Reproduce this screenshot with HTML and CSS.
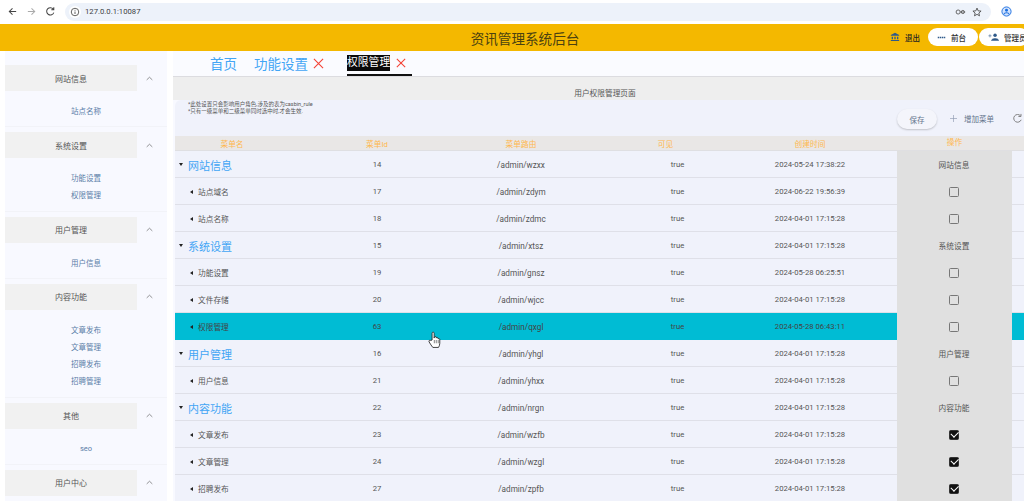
FILE: index.html
```html
<!DOCTYPE html>
<html lang="zh">
<head>
<meta charset="utf-8">
<title>资讯管理系统后台</title>
<link rel="stylesheet" href="styles.css">
</head>
<body>
<div class="browser">
  <svg class="bicon" viewBox="0 0 12 12"><path d="M10 6H2.5M6 2.5 2.5 6 6 9.5" fill="none" stroke="#444" stroke-width="1.1"/></svg>
  <svg class="bicon dim" viewBox="0 0 12 12"><path d="M2 6h7.5M6 2.5 9.5 6 6 9.5" fill="none" stroke="#aaa" stroke-width="1.1"/></svg>
  <svg class="bicon" viewBox="0 0 12 12"><path d="M9.6 7.2A4 4 0 1 1 9 3.4M9.6 1.4v2.7H6.9" fill="none" stroke="#444" stroke-width="1.1"/></svg>
  <div class="address">
    <span class="site-info"><svg viewBox="0 0 12 12" width="10" height="10"><circle cx="6" cy="6" r="4.5" fill="none" stroke="#444" stroke-width="1"/><path d="M6 5.4v3M6 3.4v1" stroke="#444" stroke-width="1"/></svg></span>
    <span class="url">127.0.0.1:10087</span>
    <span class="addr-actions">
      <svg viewBox="0 0 14 12" width="11" height="10"><circle cx="4" cy="6" r="2.6" fill="none" stroke="#555" stroke-width="1.1"/><circle cx="10" cy="6" r="2" fill="none" stroke="#555" stroke-width="1.1"/><path d="M6.5 6H13" stroke="#555"/></svg>
      <svg viewBox="0 0 12 12" width="10" height="10"><path d="M6 1.3 7.4 4.6l3.5.3-2.7 2.3.8 3.4L6 8.8l-3 1.8.8-3.4L1.1 4.9l3.5-.3z" fill="none" stroke="#444" stroke-width="1"/></svg>
    </span>
  </div>
  <svg class="profile" viewBox="0 0 12 12" width="11" height="11"><circle cx="6" cy="6" r="5" fill="#d3e3fd" stroke="#1a6fe0" stroke-width="1"/><circle cx="6" cy="4.7" r="1.6" fill="#1a6fe0"/><path d="M2.9 9.2c1-2.3 5.2-2.3 6.2 0" fill="none" stroke="#1a6fe0" stroke-width="1.1"/></svg>
</div>

<header class="topbar">
  <h1 class="title">资讯管理系统后台</h1>
  <div class="top-actions">
    <svg class="bank" viewBox="0 0 12 12" width="10" height="10"><path d="M6 1 1 3.6v1h10v-1zM2 5.6h1.6v3.2H2zM5.2 5.6h1.6v3.2H5.2zM8.4 5.6H10v3.2H8.4zM1 9.6h10v1.2H1z" fill="#2f5a8a"/></svg>
    <span class="logout">退出</span>
    <span class="pill"><svg viewBox="0 0 12 6" width="9" height="5"><path d="M1 3h10" stroke="#2f5a8a" stroke-width="2" stroke-dasharray="2 .8"/></svg>前台</span>
    <span class="pill"><svg viewBox="0 0 14 10" width="11" height="8"><circle cx="9" cy="2.8" r="2.2" fill="#2f5a8a"/><path d="M4.5 9.6c0-3.6 9-3.6 9 0zM0.5 3.5h4M2.5 1.5v4" fill="#2f5a8a" stroke="#2f5a8a" stroke-width=".7"/></svg>管理员</span>
  </div>
</header>

<div class="shell">
  <aside class="sidebar">
    <section class="group">
      <div class="group-head"><span class="group-name">网站信息</span><svg class="chev" viewBox="0 0 10 6"><path d="M1 5 5 1.2 9 5" fill="none" stroke="#666" stroke-width="1"/></svg></div>
      <ul class="items"><li>站点名称</li></ul>
    </section>
    <section class="group">
      <div class="group-head"><span class="group-name">系统设置</span><svg class="chev" viewBox="0 0 10 6"><path d="M1 5 5 1.2 9 5" fill="none" stroke="#666" stroke-width="1"/></svg></div>
      <ul class="items"><li>功能设置</li><li>权限管理</li></ul>
    </section>
    <section class="group">
      <div class="group-head"><span class="group-name">用户管理</span><svg class="chev" viewBox="0 0 10 6"><path d="M1 5 5 1.2 9 5" fill="none" stroke="#666" stroke-width="1"/></svg></div>
      <ul class="items"><li>用户信息</li></ul>
    </section>
    <section class="group">
      <div class="group-head"><span class="group-name">内容功能</span><svg class="chev" viewBox="0 0 10 6"><path d="M1 5 5 1.2 9 5" fill="none" stroke="#666" stroke-width="1"/></svg></div>
      <ul class="items"><li>文章发布</li><li>文章管理</li><li>招聘发布</li><li>招聘管理</li></ul>
    </section>
    <section class="group">
      <div class="group-head"><span class="group-name">其他</span><svg class="chev" viewBox="0 0 10 6"><path d="M1 5 5 1.2 9 5" fill="none" stroke="#666" stroke-width="1"/></svg></div>
      <ul class="items"><li>seo</li></ul>
    </section>
    <section class="group">
      <div class="group-head"><span class="group-name">用户中心</span><svg class="chev" viewBox="0 0 10 6"><path d="M1 5 5 1.2 9 5" fill="none" stroke="#666" stroke-width="1"/></svg></div>
    </section>
  </aside>

  <main class="main">
    <nav class="tabs">
      <span class="tab">首页</span>
      <span class="tab">功能设置<svg class="close" viewBox="0 0 12 12"><path d="M1 1l10 10M11 1 1 11" stroke="#f44336" stroke-width="1.2"/></svg></span>
      <span class="tab active"><span class="selected">权限管理</span><svg class="close small" viewBox="0 0 12 12"><path d="M1 1l10 10M11 1 1 11" stroke="#f44336" stroke-width="1.3"/></svg></span>
    </nav>
    <div class="page-title">用户权限管理页面</div>
    <div class="panel">
      <div class="toolbar">
        <div class="notes">
          <p>*此处设置只会影响用户角色,涉及的表为casbin_rule</p>
          <p>*只有一级菜单和二级菜单同时选中时,才会生效.</p>
        </div>
        <div class="tools">
          <button class="save">保存</button>
          <span class="add"><svg viewBox="0 0 10 10" width="7" height="7"><path d="M5 0v10M0 5h10" stroke="#8a97ad" stroke-width=".9"/></svg>增加菜单</span>
          <svg class="refresh" viewBox="0 0 12 12" width="11" height="11"><path d="M10 7.4A4.2 4.2 0 1 1 9.2 3M9.800 1v2.800H7" fill="none" stroke="#777" stroke-width="1"/></svg>
        </div>
      </div>

      <div class="table">
        <div class="row head"><span class="c-name">菜单名</span><span>菜单Id</span><span>菜单路由</span><span>可见</span><span class="c-time">创建时间</span><span class="c-op">操作</span></div>

        <div class="row parent"><span class="c-name"><i class="caret down"></i>网站信息</span><span>14</span><span class="c-route">/admin/wzxx</span><span class="c-vis">true</span><span class="c-time">2024-05-24 17:38:22</span><span class="c-op">网站信息</span></div>
        <div class="row child"><span class="c-name"><i class="caret left"></i>站点域名</span><span>17</span><span class="c-route">/admin/zdym</span><span class="c-vis">true</span><span class="c-time">2024-06-22 19:56:39</span><span class="c-op"><i class="check"></i></span></div>
        <div class="row child"><span class="c-name"><i class="caret left"></i>站点名称</span><span>18</span><span class="c-route">/admin/zdmc</span><span class="c-vis">true</span><span class="c-time">2024-04-01 17:15:28</span><span class="c-op"><i class="check"></i></span></div>
        <div class="row parent"><span class="c-name"><i class="caret down"></i>系统设置</span><span>15</span><span class="c-route">/admin/xtsz</span><span class="c-vis">true</span><span class="c-time">2024-04-01 17:15:28</span><span class="c-op">系统设置</span></div>
        <div class="row child"><span class="c-name"><i class="caret left"></i>功能设置</span><span>19</span><span class="c-route">/admin/gnsz</span><span class="c-vis">true</span><span class="c-time">2024-05-28 06:25:51</span><span class="c-op"><i class="check"></i></span></div>
        <div class="row child"><span class="c-name"><i class="caret left"></i>文件存储</span><span>20</span><span class="c-route">/admin/wjcc</span><span class="c-vis">true</span><span class="c-time">2024-04-01 17:15:28</span><span class="c-op"><i class="check"></i></span></div>
        <div class="row child hover"><span class="c-name"><i class="caret left"></i>权限管理</span><span>63</span><span class="c-route">/admin/qxgl</span><span class="c-vis">true</span><span class="c-time">2024-05-28 06:43:11</span><span class="c-op"><i class="check"></i></span>
          <svg class="cursor" viewBox="0 0 14 19" width="13" height="18"><path d="M4.4 9.5V2.2c0-1.6 2.2-1.6 2.2 0v5.2l.3-1c.5-1 1.8-.8 1.9.2l.1.8c.4-.9 1.7-.8 1.9.2l.1.8c.5-.7 1.7-.5 1.8.5v4.2c0 2-.8 3.4-1.4 4.4H5.2C4 15.900 2.500 14 1.200 11.600c-.8-1.400.8-2.500 1.900-1.500z" fill="#fff" stroke="#222" stroke-width=".9"/><path d="M6.800 9.500v3.500M8.900 9.500v3.500M11 9.500v3.500" stroke="#222" stroke-width=".6"/></svg>
        </div>
        <div class="row parent"><span class="c-name"><i class="caret down"></i>用户管理</span><span>16</span><span class="c-route">/admin/yhgl</span><span class="c-vis">true</span><span class="c-time">2024-04-01 17:15:28</span><span class="c-op">用户管理</span></div>
        <div class="row child"><span class="c-name"><i class="caret left"></i>用户信息</span><span>21</span><span class="c-route">/admin/yhxx</span><span class="c-vis">true</span><span class="c-time">2024-04-01 17:15:28</span><span class="c-op"><i class="check"></i></span></div>
        <div class="row parent"><span class="c-name"><i class="caret down"></i>内容功能</span><span>22</span><span class="c-route">/admin/nrgn</span><span class="c-vis">true</span><span class="c-time">2024-04-01 17:15:28</span><span class="c-op">内容功能</span></div>
        <div class="row child"><span class="c-name"><i class="caret left"></i>文章发布</span><span>23</span><span class="c-route">/admin/wzfb</span><span class="c-vis">true</span><span class="c-time">2024-04-01 17:15:28</span><span class="c-op"><i class="check on"></i></span></div>
        <div class="row child"><span class="c-name"><i class="caret left"></i>文章管理</span><span>24</span><span class="c-route">/admin/wzgl</span><span class="c-vis">true</span><span class="c-time">2024-04-01 17:15:28</span><span class="c-op"><i class="check on"></i></span></div>
        <div class="row child"><span class="c-name"><i class="caret left"></i>招聘发布</span><span>27</span><span class="c-route">/admin/zpfb</span><span class="c-vis">true</span><span class="c-time">2024-04-01 17:15:28</span><span class="c-op"><i class="check on"></i></span></div>
      </div>
    </div>
  </main>
</div>
</body>
</html>
```

FILE: styles.css
```css
* { box-sizing: border-box; }
html, body { margin: 0; padding: 0; height: 501px; overflow: hidden; }
body {
  background: #fff;
  color: #555;
  font-family: Roboto, "Noto Sans CJK SC", sans-serif;
  font-size: 8px;
}
p, h1, ul { margin: 0; padding: 0; }

/* browser chrome */
.browser {
  height: 23px;
  display: flex;
  align-items: center;
  padding-left: 7px;
  background: #fff;
}
.bicon { width: 11px; height: 11px; margin-right: 8px; }
.address {
  width: 926px;
  height: 18px;
  margin-left: 1px;
  border-radius: 9px;
  background: #edf2fa;
  display: flex;
  align-items: center;
  padding: 0 6px 0 4px;
}
.site-info {
  width: 12px;
  height: 12px;
  border-radius: 50%;
  background: #fff;
  display: flex;
  align-items: center;
  justify-content: center;
}
.url { margin-left: 4px; font-size: 7.7px; color: #3c4043; }
.addr-actions { margin-left: auto; display: flex; align-items: center; gap: 6px; padding-right: 3px; }
.profile { margin-left: 10px; }

/* top bar */
.topbar {
  height: 27px;
  margin-top: 1px;
  padding-left: 26px;
  background: #f4b800;
  display: flex;
  align-items: center;
  justify-content: center;
  position: relative;
  overflow: hidden;
}
.title { font-size: 13.6px; font-weight: 400; color: #4b4210; }
.top-actions {
  position: absolute;
  left: 890px;
  top: 4px;
  display: flex;
  align-items: center;
  width: 150px;
  height: 18px;
}
.logout { margin-left: 5px; margin-right: 8px; font-size: 7.5px; font-weight: 500; color: #222; }
.pill {
  flex: none;
  width: 50px;
  height: 18px;
  margin-right: 1px;
  border-radius: 9px;
  background: #fff;
  display: flex;
  align-items: center;
  padding-left: 9px;
  gap: 5px;
  font-size: 7.5px;
  font-weight: 500;
  color: #333;
}

/* shell */
.shell { display: flex; height: 450px; background: #fff; }
.sidebar {
  width: 162px;
  margin-left: 5px;
  padding-top: 14px;
  background: #f8f9ff;
  flex: none;
  overflow: hidden;
}
.group + .group { border-top: 1px solid #f2f3f8; padding-top: 5px; }
.group-head { display: flex; align-items: center; height: 26px; }
.group-name {
  width: 132px;
  height: 26px;
  background: #f1f1f1;
  display: flex;
  align-items: center;
  justify-content: center;
  font-size: 8px;
  color: #555;
}
.chev { width: 7px; height: 5px; margin-left: 9px; }
.items { list-style: none; padding: 11px 0 7px; }
.items li {
  height: 17.2px;
  display: flex;
  align-items: center;
  justify-content: center;
  font-size: 7.5px;
  color: #5b7ea8;
}

.main { flex: 1; min-width: 0; margin-left: 6px; background: #f8f9ff; overflow: hidden; }
.tabs {
  height: 26px;
  background: #fafbff;
  display: flex;
  align-items: center;
  padding-left: 37px;
  gap: 17px;
  border-bottom: 1px solid #dcdce0;
}
.tab { display: flex; align-items: center; font-size: 13.5px; color: #42a5f5; line-height: 20px; }
.tab.active {
  margin-left: 6px;
  font-size: 10.8px;
  color: #fff;
  height: 25px;
  border-bottom: 2px solid #111;
  padding-right: 6px;
}
.selected { background: #0a0a0a; line-height: 16px; }
.close { width: 11px; height: 11px; margin-left: 5px; }
.close.small { width: 10px; height: 10px; margin-left: 6px; }

.page-title {
  height: 23px;
  background: #eeeeee;
  display: flex;
  align-items: center;
  justify-content: center;
  padding-top: 8px;
  padding-left: 13px;
  font-size: 7.7px;
  color: #555;
}
.panel {
  margin-left: 2px;
  background: #f0f2fb;
  border-top-left-radius: 6px;
}
.toolbar { height: 36px; display: flex; justify-content: space-between; }
.notes { padding: 1px 0 0 13px; font-size: 5.5px; line-height: 7.4px; color: #555; }
.tools { display: flex; align-items: center; height: 36px; padding-top: 1px; }
.save {
  width: 40px;
  height: 20px;
  margin-top: 1px;
  border: 0;
  border-radius: 10px;
  background: #f4f5fb;
  box-shadow: 0 1px 2px rgba(0, 0, 0, .2);
  font: 7.5px Roboto, "Noto Sans CJK SC", sans-serif;
  color: #64748c;
}
.add {
  display: flex;
  align-items: center;
  gap: 7px;
  margin-left: 13px;
  font-size: 7.5px;
  color: #64748c;
}
.refresh { margin-left: 18px; margin-right: 1px; }

/* table */
.table { position: relative; }
.row {
  display: grid;
  grid-template-columns: 130px 144px 144px 145px 159px 115px 12px;
  height: 27px;
  align-items: center;
  border-bottom: 1px solid #dfe0e8;
  font-size: 7.7px;
  color: #555;
  text-align: center;
  position: relative;
}
.row > span { display: block; }
.row.head {
  height: 15px;
  background: #e9e7e6;
  border-bottom: 1px solid #dfdfe2;
  color: #ffb74d;
}
.c-name { text-align: left; display: flex !important; align-items: center; }
.row.head .c-name { justify-content: center; padding-right: 16px; }
.row.parent .c-name { padding-left: 4px; font-size: 11px; color: #42a5f5; }
.row.child .c-name { padding-left: 15px; }
.c-route { font-size: 8.2px; }
.c-vis { padding-left: 24px; }
.c-time { padding-right: 15px; white-space: nowrap; }
.row .c-op {
  align-self: stretch;
  height: 27px;
  background: #e0e0e0;
  display: flex;
  align-items: center;
  justify-content: center;
  padding-right: 1px;
}
.row.head .c-op { height: 14px; display: block; padding: 0; background: none; line-height: 14px; }
.row.hover { background: #00bcd4; border-bottom-color: #00bcd4; color: #444; }

.caret { display: inline-block; width: 0; height: 0; flex: none; }
.caret.down {
  margin-right: 5px;
  border-left: 2.5px solid transparent;
  border-right: 2.5px solid transparent;
  border-top: 3px solid #222;
}
.caret.left {
  margin-right: 5px;
  border-top: 2.5px solid transparent;
  border-bottom: 2.5px solid transparent;
  border-right: 3px solid #222;
}
.check {
  display: block;
  width: 10px;
  height: 10px;
  border: 1.3px solid #777;
  border-radius: 1.5px;
  position: relative;
}
.check.on { background: #111; border-color: #333; }
.check.on::after {
  content: "";
  position: absolute;
  left: 1px;
  top: .5px;
  width: 6px;
  height: 3.5px;
  border-left: 1.2px solid #fff;
  border-bottom: 1.2px solid #fff;
  transform: rotate(-45deg);
}
.cursor { position: absolute; left: 253px; top: 18px; z-index: 2; }
```
